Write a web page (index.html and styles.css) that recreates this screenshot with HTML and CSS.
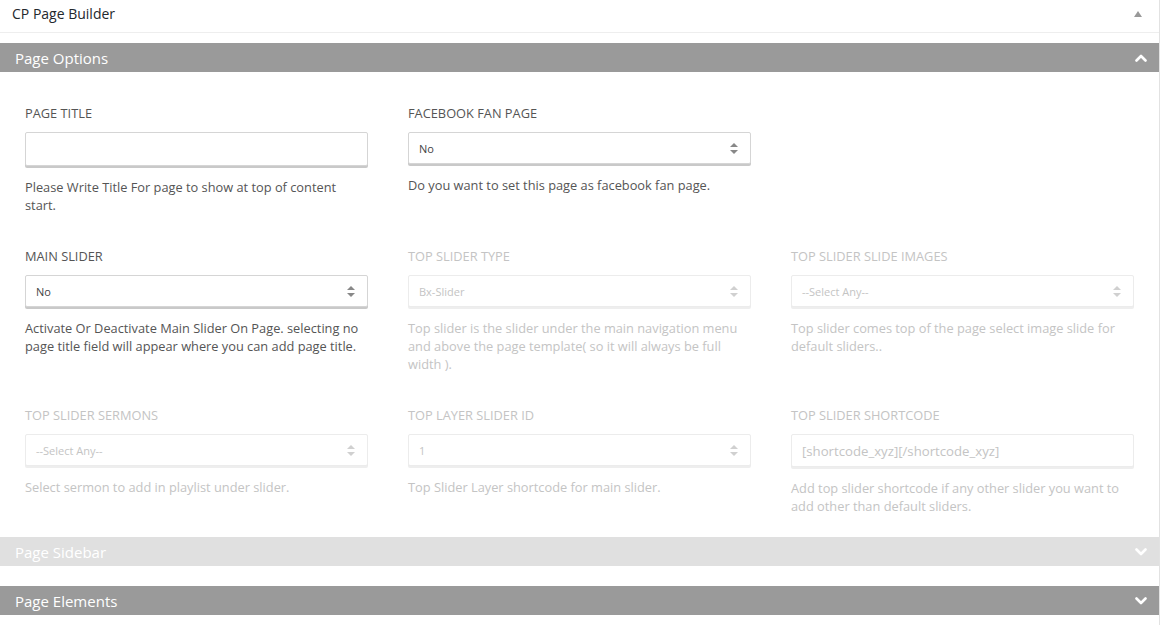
FILE: index.html
```html
<!DOCTYPE html>
<html>
<head>
<meta charset="utf-8">
<link rel="stylesheet" href="styles.css">
</head>
<body>
<div class="wrap">
  <div class="head">
    <span class="head-title">CP Page Builder</span>
    <span class="head-tri"></span>
  </div>

  <div class="bar bar-dark">
    <span>Page Options</span>
    <svg class="chev" width="12" height="8" viewBox="0 0 12 8"><path d="M1.5 6.5 L6 2 L10.5 6.5" fill="none" stroke="#fff" stroke-width="2.6" stroke-linecap="round" stroke-linejoin="round"/></svg>
  </div>

  <div class="content">
    <div class="grid">
      <div class="field">
        <div class="label">PAGE TITLE</div>
        <div class="input tall"></div>
        <div class="desc">Please Write Title For page to show at top of content start.</div>
      </div>
      <div class="field">
        <div class="label">FACEBOOK FAN PAGE</div>
        <div class="input sel"><span>No</span><span class="arrows"></span></div>
        <div class="desc">Do you want to set this page as facebook fan page.</div>
      </div>
      <div class="field"></div>

      <div class="field">
        <div class="label">MAIN SLIDER</div>
        <div class="input sel"><span>No</span><span class="arrows"></span></div>
        <div class="desc">Activate Or Deactivate Main Slider On Page. selecting no page title field will appear where you can add page title.</div>
      </div>
      <div class="field off">
        <div class="label">TOP SLIDER TYPE</div>
        <div class="input sel"><span>Bx-Slider</span><span class="arrows"></span></div>
        <div class="desc">Top slider is the slider under the main navigation menu and above the page template( so it will always be full width ).</div>
      </div>
      <div class="field off">
        <div class="label">TOP SLIDER SLIDE IMAGES</div>
        <div class="input sel"><span>--Select Any--</span><span class="arrows"></span></div>
        <div class="desc">Top slider comes top of the page select image slide for default sliders..</div>
      </div>

      <div class="field off">
        <div class="label">TOP SLIDER SERMONS</div>
        <div class="input sel"><span>--Select Any--</span><span class="arrows"></span></div>
        <div class="desc">Select sermon to add in playlist under slider.</div>
      </div>
      <div class="field off">
        <div class="label">TOP LAYER SLIDER ID</div>
        <div class="input sel"><span>1</span><span class="arrows"></span></div>
        <div class="desc">Top Slider Layer shortcode for main slider.</div>
      </div>
      <div class="field off">
        <div class="label">TOP SLIDER SHORTCODE</div>
        <div class="input text"><span>[shortcode_xyz][/shortcode_xyz]</span></div>
        <div class="desc">Add top slider shortcode if any other slider you want to add other than default sliders.</div>
      </div>
    </div>
  </div>

  <div class="bar bar-light">
    <span>Page Sidebar</span>
    <svg class="chev" width="12" height="8" viewBox="0 0 12 8"><path d="M1.5 1.5 L6 6 L10.5 1.5" fill="none" stroke="#fff" stroke-width="2.6" stroke-linecap="round" stroke-linejoin="round"/></svg>
  </div>
  <div class="spacer"></div>
  <div class="bar bar-dark">
    <span>Page Elements</span>
    <svg class="chev" width="12" height="8" viewBox="0 0 12 8"><path d="M1.5 1.5 L6 6 L10.5 1.5" fill="none" stroke="#fff" stroke-width="2.6" stroke-linecap="round" stroke-linejoin="round"/></svg>
  </div>
  <div class="tail"></div>
</div>
</body>
</html>
```

FILE: styles.css
```css
* { box-sizing: border-box; }
html, body { margin: 0; padding: 0; background: #fff; }
body { font-family: "Open Sans", "Noto Sans", sans-serif; color: #555; }

.wrap {
  width: 1160px;
  border-right: 1px solid #e2e2e2;
  min-height: 625px;
}

.head {
  height: 33px;
  border-bottom: 1px solid #eeeeee;
  display: flex;
  align-items: center;
  justify-content: space-between;
  padding: 0 17px 5px 12px;
  margin-bottom: 10px;
}
.head-title { font-size: 14px; font-weight: 400; color: #23282d; }
.head-tri {
  width: 0; height: 0;
  border-left: 4px solid transparent;
  border-right: 4px solid transparent;
  border-bottom: 6px solid #999;
  margin-top: 1px;
}

.bar {
  height: 29px;
  display: flex;
  align-items: center;
  justify-content: space-between;
  padding: 0 12px 0 15px;
  color: #fff;
  font-size: 15px;
  font-weight: 400;
}
.bar-dark { background: #9a9a9a; }
.bar-light { background: #e0e0e0; }
.chev { display: block; }

.content { padding: 32px 0 22px 25px; }
.grid {
  display: grid;
  grid-template-columns: 343px 343px 343px;
  column-gap: 40px;
  row-gap: 33px;
}
.label { font-size: 12.8px; line-height: 18px; color: #555; margin-bottom: 10px; }
.input {
  height: 34px;
  border: 1px solid #d5d5d5;
  border-radius: 2px;
  box-shadow: 0 2px 0 #c9c9c9;
  background: #fff;
  display: flex;
  align-items: center;
  justify-content: space-between;
  padding: 0 12px 0 10px;
  font-size: 11px;
  color: #444;
}
.input.tall { height: 34px; }
.input.sel { height: 32px; }
.input.text { height: 33px; font-size: 13.2px; }
.arrows {
  position: relative;
  width: 8px; height: 11px;
}
.arrows::before, .arrows::after {
  content: "";
  position: absolute;
  left: 0;
  border-left: 4px solid transparent;
  border-right: 4px solid transparent;
}
.arrows::before { top: 0; border-bottom: 4px solid #888; }
.arrows::after { bottom: 0; border-top: 4px solid #888; }

.desc { font-size: 12.8px; line-height: 18px; margin-top: 12px; color: #555; }

.off .label, .off .desc { color: #c4c4c4; }
.off .input { color: #c4c4c4; border-color: #ececec; box-shadow: 0 2px 0 #eeeeee; }
.off .arrows::before { border-bottom-color: #d0d0d0; }
.off .arrows::after { border-top-color: #d0d0d0; }

.spacer { height: 20px; }
.tail { height: 10px; }
```
